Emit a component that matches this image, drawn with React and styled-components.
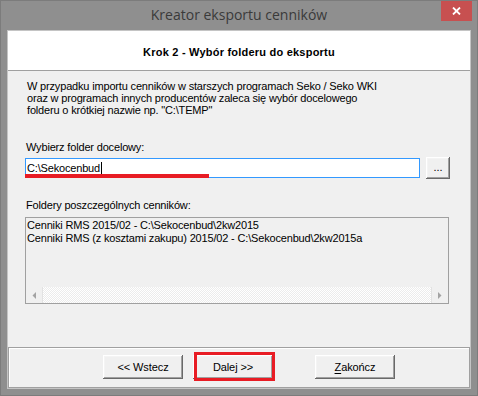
import React from 'react';
import styled, { createGlobalStyle } from 'styled-components';

const Global = createGlobalStyle`
  html, body { margin: 0; padding: 0; background: #8f8f8f; }
  #root { width: 478px; height: 396px; }
  *, *::before, *::after { box-sizing: border-box; }
`;

const Window = styled.div`
  width: 478px;
  height: 396px;
  background: #8f8f8f;
  border: 1px solid #7c7c7c;
  display: flex;
  flex-direction: column;
  font-family: "Liberation Sans", Arial, sans-serif;
  font-size: 11px;
  letter-spacing: -0.17px;
  color: #000;
`;

const TitleBar = styled.div`
  height: 29px;
  display: grid;
  grid-template-columns: 1fr auto 1fr;
  align-items: start;
`;

const Title = styled.div`
  grid-column: 2;
  font-family: "Open Sans", "Noto Sans", sans-serif;
  font-size: 14px;
  letter-spacing: 0;
  line-height: 28px;
  color: #3a3a3a;
  white-space: nowrap;
`;

const CloseButton = styled.div`
  grid-column: 3;
  justify-self: end;
  margin-right: 5px;
  width: 31px;
  height: 20px;
  background: #c75050;
  display: flex;
  align-items: center;
  justify-content: center;
`;

const Client = styled.div`
  flex: 1;
  margin: 0 6px 6px 6px;
  border: 1px solid #c4c4c4;
  background: #f0f0f0;
  display: flex;
  flex-direction: column;
`;

const Header = styled.div`
  height: 40px;
  background: #fff;
  border-bottom: 1px solid #a0a0a0;
  display: flex;
  justify-content: center;
  padding-top: 15px;
  font-weight: bold;
  letter-spacing: 0.22px;
  line-height: 13px;
`;

const Body = styled.div`
  flex: 1;
  display: flex;
  flex-direction: column;
  padding: 9px 20px 0 17px;
`;

const Paragraph = styled.p`
  margin: 0;
  padding-left: 2px;
  line-height: 12px;
`;

const Label = styled.div`
  margin-top: ${p => p.$top}px;
  padding-left: 1px;
  line-height: 12px;
`;

const InputRow = styled.div`
  margin-top: 4px;
  height: 22px;
  display: flex;
  align-items: center;
  gap: 6px;
`;

const InputWrap = styled.div`
  position: relative;
  width: 395px;
  height: 20px;
`;

const TextInput = styled.div`
  height: 20px;
  background: #fff;
  border: 1px solid #3399ff;
  padding-left: 1px;
  display: flex;
  align-items: center;
  line-height: 13px;
`;

const Caret = styled.span`
  display: inline-block;
  width: 1px;
  height: 13px;
  margin-left: 1px;
  background: #000;
`;

const RedUnderline = styled.div`
  position: absolute;
  left: 0;
  top: 16px;
  width: 184px;
  height: 4px;
  background: #e81c24;
`;

const Button = styled.button`
  width: ${p => p.$w}px;
  height: ${p => p.$h}px;
  margin-left: ${p => p.$ml || 0}px;
  padding: 0;
  border: none;
  background: #f0f0f0;
  box-shadow: inset -1px -1px 0 #696969, inset 1px 1px 0 #fff,
    inset -2px -2px 0 #a0a0a0, inset 2px 2px 0 #f4f4f4;
  font-family: "Liberation Sans", Arial, sans-serif;
  font-size: 11px;
  letter-spacing: -0.1px;
  color: #000;
  line-height: 13px;
  display: flex;
  align-items: center;
  justify-content: center;
  u { text-decoration: underline; text-underline-offset: 2px; }
`;

const DotsButton = styled(Button)`
  align-items: flex-end;
  padding-bottom: 5px;
`;

const ListBox = styled.div`
  margin-top: 6px;
  width: 424px;
  height: 87px;
  border: 1px solid #a0a0a0;
  background: #f0f0f0;
  display: flex;
  flex-direction: column;
`;

const ListItems = styled.div`
  flex: 1;
  padding: 1px 0 0 1px;
  line-height: 13px;
  white-space: nowrap;
`;

const HScroll = styled.div`
  height: 16px;
  display: flex;
  background: repeating-conic-gradient(#ffffff 0 25%, #ececec 0 50%) 0 0 / 2px 2px;
`;

const ScrollArrow = styled.div`
  width: 17px;
  height: 16px;
  background: #f0f0f0;
  border-${p => (p.$side === 'left' ? 'right' : 'left')}: 1px solid #e2e2e2;
  display: flex;
  align-items: center;
  justify-content: center;
`;

const Track = styled.div`
  flex: 1;
`;

const BottomPanel = styled.div`
  height: 41px;
  border: 1px solid #a0a0a0;
  box-shadow: inset 1px 1px 0 #fff;
  display: flex;
  align-items: flex-start;
  padding: 7px 0 0 94px;
  gap: 10px;
`;

const Highlight = styled.div`
  position: relative;
  &::after {
    content: "";
    position: absolute;
    left: 1px;
    top: -3px;
    width: 81px;
    height: 29px;
    border: 3px solid #e81c24;
    pointer-events: none;
  }
`;

const Arrow = ({ dir }) => (
  <svg width="4" height="7" viewBox="0 0 4 7">
    {dir === 'left' ? (
      <polygon points="4,0 4,7 0.5,3.5" fill="#a3a3a3" />
    ) : (
      <polygon points="0,0 0,7 3.5,3.5" fill="#a3a3a3" />
    )}
  </svg>
);

export default function App() {
  return (
    <>
      <Global />
      <Window>
        <TitleBar>
          <Title>Kreator eksportu cenników</Title>
          <CloseButton>
            <svg width="9" height="8" viewBox="0 0 9 8">
              <path d="M1 0.5 L8 7.5 M8 0.5 L1 7.5" stroke="#fff" strokeWidth="1.8" />
            </svg>
          </CloseButton>
        </TitleBar>
        <Client>
          <Header>Krok 2 - Wybór folderu do eksportu</Header>
          <Body>
            <Paragraph>
              W przypadku importu cenników w starszych programach Seko / Seko WKI
              <br />
              oraz w programach innych producentów zaleca się wybór docelowego
              <br />
              folderu o krótkiej nazwie np. "C:\TEMP"
            </Paragraph>
            <Label $top={25}>Wybierz folder docelowy:</Label>
            <InputRow>
              <InputWrap>
                <TextInput>
                  C:\Sekocenbud
                  <Caret />
                </TextInput>
                <RedUnderline />
              </InputWrap>
              <DotsButton $w={24} $h={22}>...</DotsButton>
            </InputRow>
            <Label $top={20}>Foldery poszczególnych cenników:</Label>
            <ListBox>
              <ListItems>
                Cenniki RMS 2015/02 - C:\Sekocenbud\2kw2015
                <br />
                Cenniki RMS (z kosztami zakupu) 2015/02 - C:\Sekocenbud\2kw2015a
              </ListItems>
              <HScroll>
                <ScrollArrow $side="left"><Arrow dir="left" /></ScrollArrow>
                <Track />
                <ScrollArrow $side="right"><Arrow dir="right" /></ScrollArrow>
              </HScroll>
            </ListBox>
          </Body>
          <BottomPanel>
            <Button $w={80} $h={24}>&lt;&lt; Wstecz</Button>
            <Highlight>
              <Button $w={80} $h={24}>Dalej &gt;&gt;</Button>
            </Highlight>
            <Button $w={80} $h={24} $ml={32}><u>Z</u>akończ</Button>
          </BottomPanel>
        </Client>
      </Window>
    </>
  );
}
